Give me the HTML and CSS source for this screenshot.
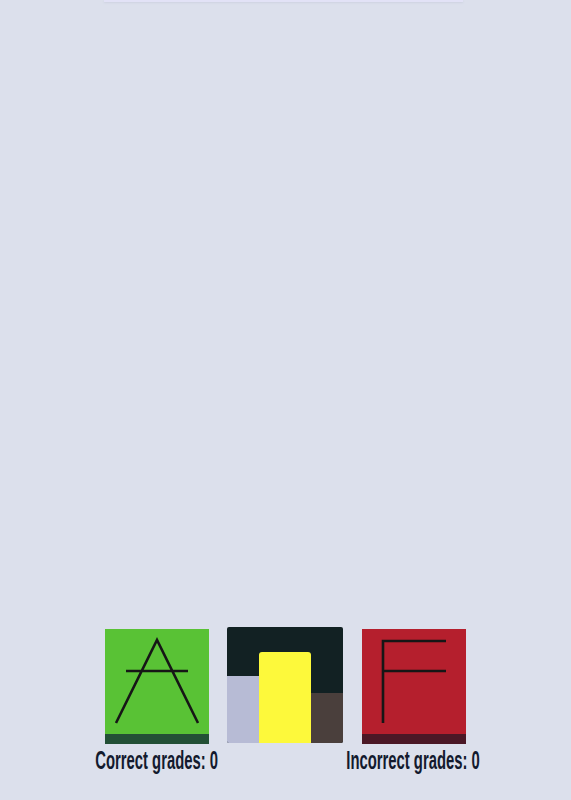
FILE: index.html
```html
<!DOCTYPE html>
<html lang="en">
  <head>
    <meta charset="UTF-8" />
    <meta name="viewport" content="width=device-width, initial-scale=1.0" />
    <title>Grades</title>
    <link rel="stylesheet" href="styles.css">
  </head>
  <body>
    <div class="page">
      <!-- thin bar at the top of the screen -->
      <div class="top-bar"></div>

      <div class="spacer"></div>

      <!-- the grading row -->
      <div class="grade-row">
        <div class="grade-col">
          <div class="card card-green">
            <svg class="letter" viewBox="0 0 104 105" width="104" height="105">
              <path d="M11 94 L52 11 L93 94 M21 42 L83 42" />
            </svg>
          </div>
          <div class="label">Correct grades: 0</div>
        </div>

        <div class="stack">
          <div class="stack-left"></div>
          <div class="stack-mid"></div>
          <div class="stack-right"></div>
        </div>

        <div class="grade-col grade-col-last">
          <div class="card card-red">
            <svg class="letter" viewBox="0 0 104 105" width="104" height="105">
              <path d="M21 94 L21 12 L84 12 M21 42 L84 42" />
            </svg>
          </div>
          <div class="label">Incorrect grades: 0</div>
        </div>
      </div>
    </div>
  </body>
</html>
```

FILE: styles.css
```css
body {
  margin: 0;
  background-color: #dce0ec;
}

* {
  box-sizing: border-box;
}

.page {
  display: flex;
  flex-direction: column;
  height: 100vh;
}

.top-bar {
  align-self: center;
  width: 359px;
  height: 2px;
  margin-right: 4px;
  background-color: #e2e2f6;
  box-shadow: 0 1px 2px rgba(180, 185, 205, 0.35);
}

.spacer {
  flex: 1 1 0;
}

.grade-row {
  display: flex;
  justify-content: center;
  align-items: flex-start;
  gap: 18px;
  height: 173px;
  padding-right: 1px;
}

.grade-col {
  display: flex;
  flex-direction: column;
  align-items: center;
  width: 104px;
  padding-top: 2px;
}

.grade-col-last {
  margin-left: 1px;
}

.card {
  width: 104px;
  height: 115px;
  border-bottom: 10px solid;
}

.card-green {
  background-color: #59c235;
  border-bottom-color: #235036;
}

.card-red {
  background-color: #b51f2d;
  border-bottom-color: #4b1826;
}

.letter {
  display: block;
  fill: none;
  stroke: #161616;
  stroke-width: 2.6;
}

.label {
  white-space: nowrap;
  margin-top: 2px;
  font-family: "Liberation Sans", sans-serif;
  font-weight: bold;
  font-size: 26px;
  line-height: 28px;
  color: #131a2e;
  transform: scaleX(0.57);
}

.stack {
  width: 116px;
  height: 116px;
  border-radius: 2px;
  overflow: hidden;
  background-color: #122123;
  display: flex;
  align-items: flex-end;
}

.stack-left {
  width: 32px;
  height: 67px;
  background-color: #b7bbd5;
}

.stack-mid {
  width: 52px;
  height: 91px;
  border-radius: 3px 3px 0 0;
  background-color: #fdf93b;
}

.stack-right {
  width: 32px;
  height: 50px;
  background-color: #4a3f3c;
}
```
